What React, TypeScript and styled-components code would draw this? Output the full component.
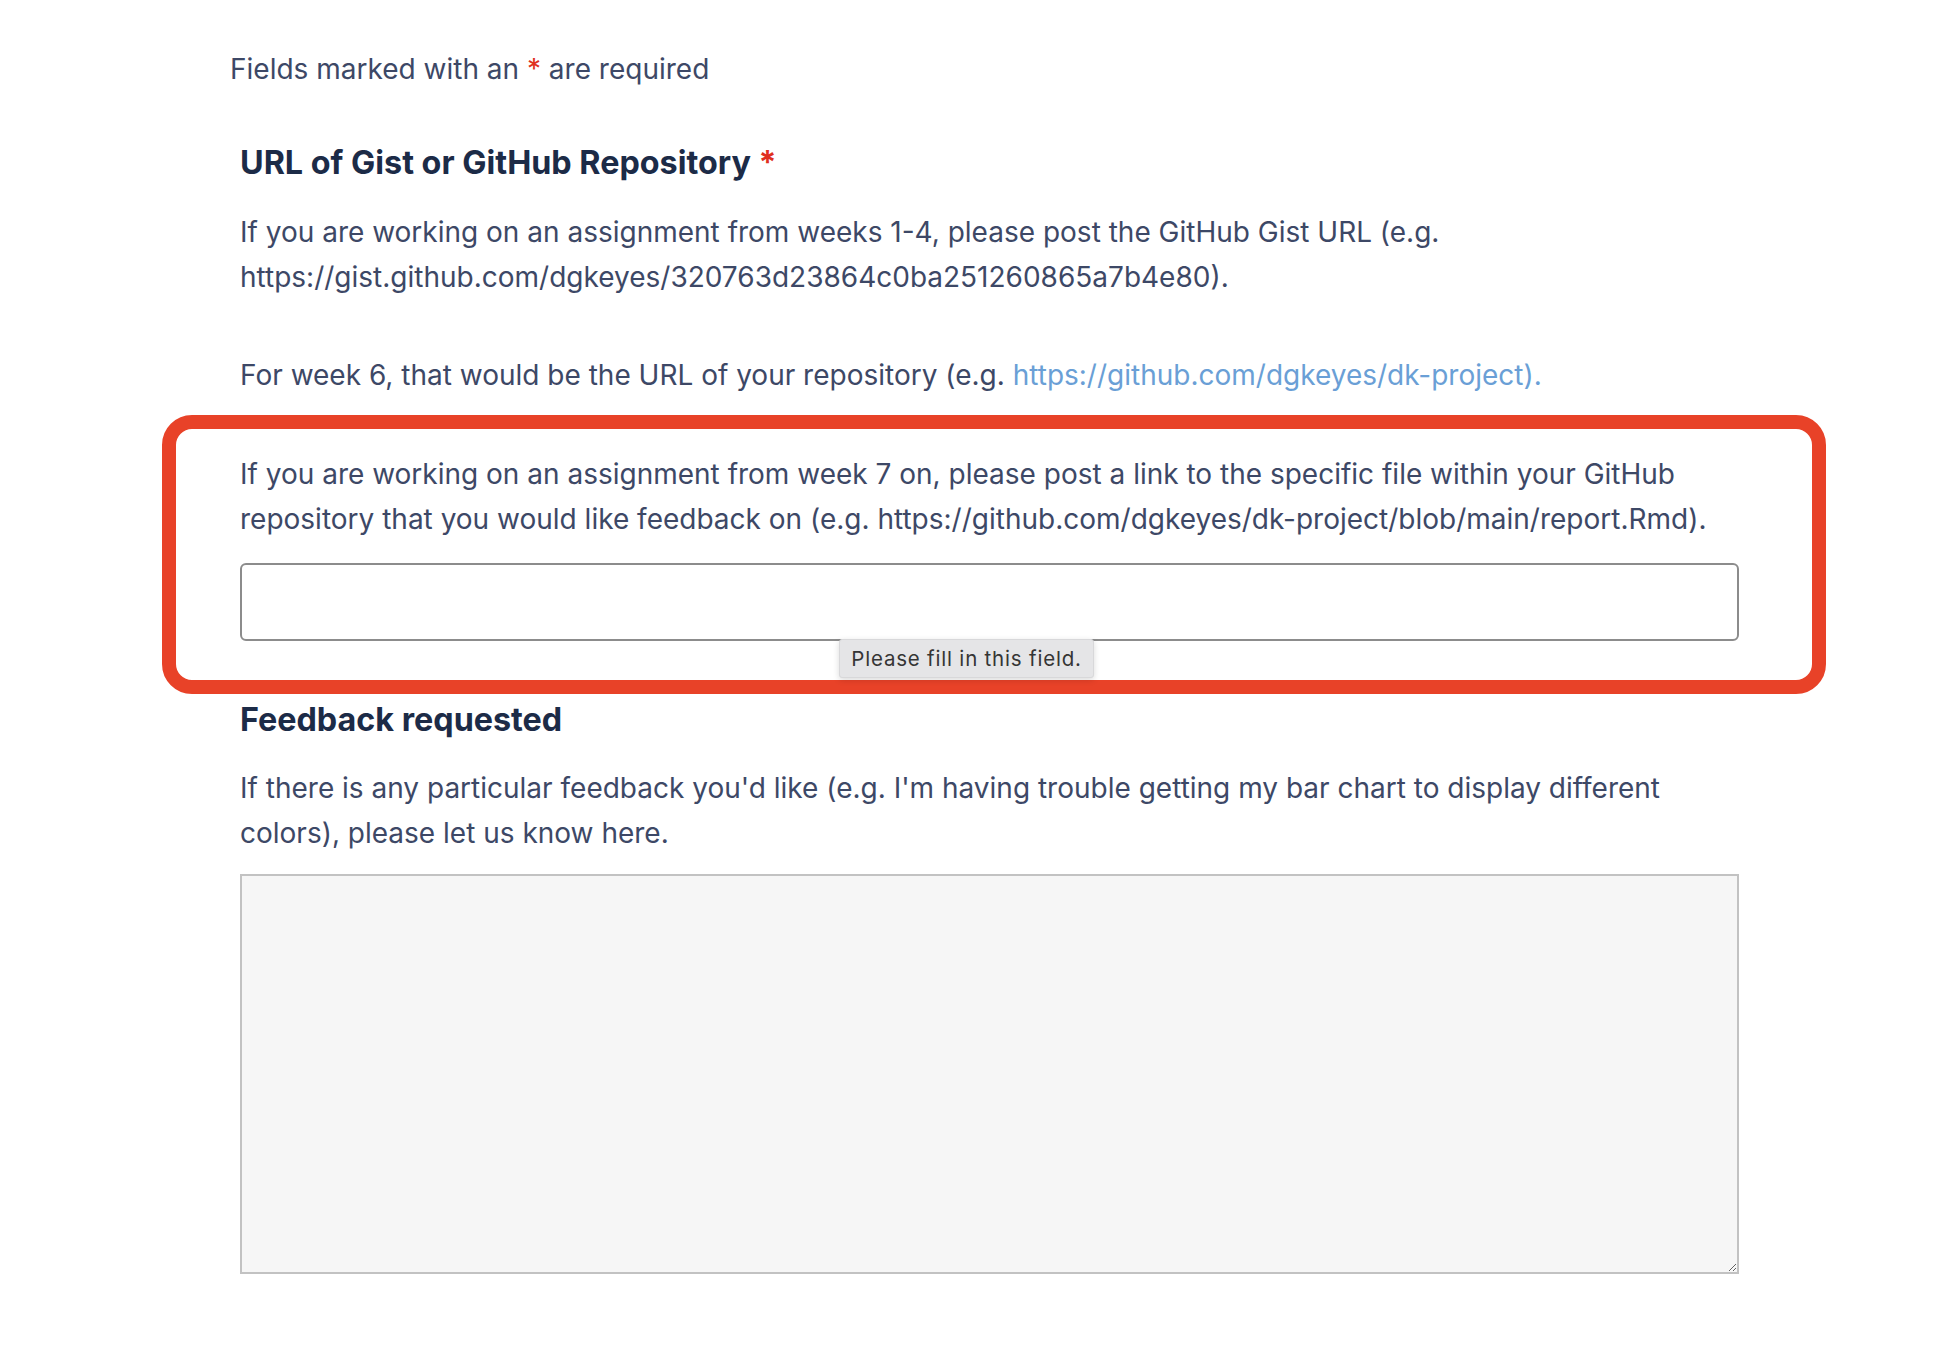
import React from "react";
import styled, { createGlobalStyle } from "styled-components";

const Global = createGlobalStyle`
  html, body { margin: 0; padding: 0; background: #ffffff; }
  body { font-family: Inter, "Noto Sans", sans-serif; -webkit-font-smoothing: antialiased; }
`;

const Page = styled.div`
  padding: 47px 0 60px 240px;
  width: 1499px;
`;

const RequiredNote = styled.p`
  margin: 0 0 0 -10px;
  font-size: 28px;
  line-height: 45px;
  color: #3d4866;
`;

const Star = styled.span`
  color: #e0301e;
`;

const Heading = styled.h2<{ $top: number }>`
  margin: ${(p) => p.$top}px 0 0;
  font-size: 32.3px;
  line-height: 42px;
  font-weight: 700;
  color: #1c2b47;
`;

const Para = styled.p<{ $top: number }>`
  margin: ${(p) => p.$top}px 0 0;
  font-size: 28px;
  line-height: 45px;
  color: #3d4866;
`;

const Link = styled.a`
  color: #6a9fd6;
  text-decoration: none;
`;

const Highlight = styled.div`
  margin: 17px -87px 0 -78px;
  border: 14px solid #e84228;
  border-radius: 30px;
  padding: 23px 73px 39px 64px;
`;

const FieldWrap = styled.div`
  position: relative;
  margin-top: 21px;
`;

const TextInput = styled.input`
  display: block;
  box-sizing: border-box;
  width: 100%;
  height: 78px;
  border: 2px solid #8c8c8c;
  border-radius: 6px;
  background: #ffffff;
  outline: none;
`;

const Tooltip = styled.div`
  position: absolute;
  left: 599px;
  top: 76px;
  box-sizing: border-box;
  width: 255px;
  height: 39px;
  display: flex;
  align-items: center;
  justify-content: center;
  background: #e5e5e7;
  border: 1px solid #d8d8da;
  border-radius: 3px;
  box-shadow: 0 2px 6px rgba(0, 0, 0, 0.15);
  font-family: Inter, "Liberation Sans", sans-serif;
  font-size: 20.5px;
  letter-spacing: 0.8px;
  color: #353535;
`;

const TextArea = styled.textarea`
  display: block;
  box-sizing: border-box;
  width: 100%;
  height: 400px;
  margin-top: 18px;
  border: 2px solid #c2c2c2;
  background: #f6f6f6;
  resize: both;
  outline: none;
`;

export default function App() {
  return (
    <>
      <Global />
      <Page>
        <RequiredNote>
          Fields marked with an <Star>*</Star> are required
        </RequiredNote>
        <Heading $top={50}>
          URL of Gist or GitHub Repository <Star>*</Star>
        </Heading>
        <Para $top={26}>
          If you are working on an assignment from weeks 1-4, please post the GitHub Gist URL (e.g.
          <br />
          https://gist.github.com/dgkeyes/320763d23864c0ba251260865a7b4e80).
        </Para>
        <Para $top={53}>
          For week 6, that would be the URL of your repository (e.g.{" "}
          <Link href="#">https://github.com/dgkeyes/dk-project).</Link>
        </Para>
        <Highlight>
          <Para $top={0}>
            If you are working on an assignment from week 7 on, please post a link to the specific file within your GitHub
            <br />
            repository that you would like feedback on (e.g. https://github.com/dgkeyes/dk-project/blob/main/report.Rmd).
          </Para>
          <FieldWrap>
            <TextInput type="text" aria-label="URL of Gist or GitHub Repository" />
            <Tooltip>Please fill in this field.</Tooltip>
          </FieldWrap>
        </Highlight>
        <Heading $top={5}>Feedback requested</Heading>
        <Para $top={25}>
          If there is any particular feedback you'd like (e.g. I'm having trouble getting my bar chart to display different
          <br />
          colors), please let us know here.
        </Para>
        <TextArea aria-label="Feedback requested" />
      </Page>
    </>
  );
}
